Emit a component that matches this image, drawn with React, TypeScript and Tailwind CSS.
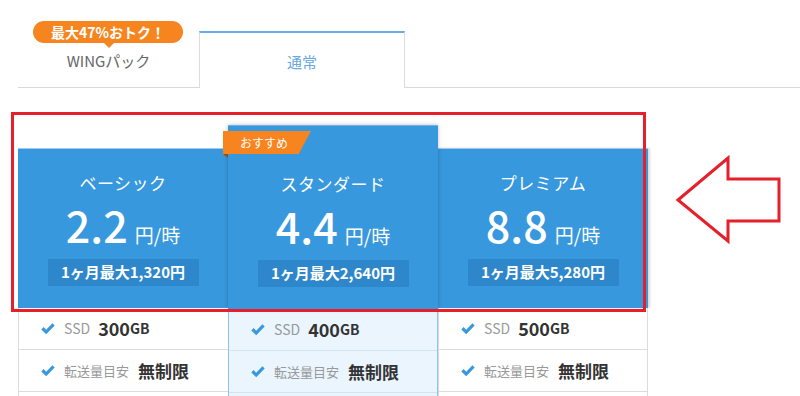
import React from 'react';

type Plan = {
  name: string;
  price: string;
  monthly: string;
  ssd: string;
  featured?: boolean;
};

const plans: Plan[] = [
  { name: 'ベーシック', price: '2.2', monthly: '1ヶ月最大1,320円', ssd: '300' },
  { name: 'スタンダード', price: '4.4', monthly: '1ヶ月最大2,640円', ssd: '400', featured: true },
  { name: 'プレミアム', price: '8.8', monthly: '1ヶ月最大5,280円', ssd: '500' },
];

function Check() {
  return (
    <svg width="14" height="12" viewBox="0 0 14 12" className="shrink-0">
      <path d="M0.3 6.4 L2.6 4.1 L5.2 6.7 L11.4 0.3 L13.7 2.6 L5.2 11.3 Z" fill="#3a98dc" />
    </svg>
  );
}

function PlanColumn({ plan, last }: { plan: Plan; last?: boolean }) {
  const f = plan.featured;
  return (
    <div className={f ? 'relative z-10 flex flex-col' : 'flex flex-col'}>
      <div
        className={
          f
            ? 'relative bg-[#3898dd] pt-[47px] pb-[22px] text-white shadow-[0_0_4px_rgba(0,0,0,0.25)] border-t border-[#6fb3ea]'
            : 'mt-[23px] bg-[#3898dd] pt-[23px] pb-[22px] text-white border-t border-[#9cc9ef]' +
              (last ? ' shadow-[2px_0_2px_rgba(0,0,0,0.15)]' : '')
        }
      >
        {f && (
          <>
            <div className="absolute left-[-5px] top-[5px] flex h-[23px] w-[88px] items-center justify-center bg-[#f7841e] pr-[6px] text-[12px] text-white [clip-path:polygon(0_0,100%_0,86%_100%,0_100%)]">
              おすすめ
            </div>
            <div className="absolute left-[-5px] top-[28px] h-[4px] w-[5px] bg-[#9c4a10] [clip-path:polygon(0_0,100%_0,100%_100%)]" />
          </>
        )}
        <div className="text-center text-[17px] leading-[22px] tracking-[0.5px]">{plan.name}</div>
        <div className="mt-[9px] flex h-[43px] items-baseline justify-center leading-none">
          <span className="text-[43px] font-medium">{plan.price}</span>
          <span className="ml-[7px] text-[19px]">円/時</span>
        </div>
        <div className="mx-auto mt-[13px] flex h-[27px] w-[151px] items-center justify-center bg-[#2f87cb] text-[15px] font-bold">
          {plan.monthly}
        </div>
      </div>
      <div
        className={
          f
            ? 'border-x border-[#8fc2eb] bg-[#eaf5fe]'
            : 'border-l border-[#dcdcdc]' + (last ? ' border-r' : '')
        }
      >
        <div className={'flex h-[42px] items-center pl-[22px] border-b ' + (f ? 'border-[#d3e3f0]' : 'border-[#dcdcdc]')}>
          <Check />
          <span className="ml-[9px] text-[14px] text-[#999]">SSD</span>
          <span className="ml-[8px] text-[18px] font-bold text-[#333]">{plan.ssd}</span>
          <span className="text-[14px] font-bold text-[#333]">GB</span>
        </div>
        <div className={'flex h-[42px] items-center pl-[22px] border-b ' + (f ? 'border-[#d3e3f0]' : 'border-[#dcdcdc]')}>
          <Check />
          <span className="ml-[9px] text-[13px] text-[#999]">転送量目安</span>
          <span className="ml-[9px] text-[17px] font-bold text-[#333]">無制限</span>
        </div>
        <div className="h-[42px]" />
      </div>
    </div>
  );
}

export default function App() {
  return (
    <div
      className="relative h-[396px] w-[800px] overflow-hidden bg-white"
      style={{ fontFamily: '"Noto Sans CJK JP", "Noto Sans", sans-serif' }}
    >
      <div className="pt-[31px] pl-[18px]">
        <div className="flex h-[57px] border-b border-[#d9d9d9]">
          <div className="relative flex w-[181px] items-center justify-center text-[15px] text-[#666]">
            <div className="absolute left-[15px] top-[-10px] flex h-[22px] w-[150px] items-center justify-center rounded-full bg-[#f6851f] text-[14px] font-bold text-white">
              最大47%おトク！
              <span className="absolute bottom-[-5px] left-[71px] h-0 w-0 border-x-[5px] border-t-[5px] border-x-transparent border-t-[#f6851f]" />
            </div>
            <span className="mt-[4px]">WINGパック</span>
          </div>
          <div className="-mb-px flex w-[206px] items-center justify-center border-x border-t-2 border-x-[#dcdcdc] border-t-[#68ace5] bg-white text-[15px] text-[#6aa8df]">
            <span className="mt-[4px]">通常</span>
          </div>
        </div>
      </div>

      <div className="ml-[18px] mt-[37px] grid w-[630px] grid-cols-3">
        {plans.map((p, i) => (
          <PlanColumn key={p.name} plan={p} last={i === plans.length - 1} />
        ))}
      </div>

      <div className="pointer-events-none absolute left-[11px] top-[112px] z-20 h-[200px] w-[635px] border-[3px] border-[#e6202a]" />

      <svg className="absolute left-[670px] top-[150px]" width="120" height="100" viewBox="0 0 120 100">
        <polygon
          points="8,50 58,8 58,29 109,29 109,71 58,71 58,91"
          fill="none"
          stroke="#e6202a"
          strokeWidth="3"
        />
      </svg>
    </div>
  );
}
